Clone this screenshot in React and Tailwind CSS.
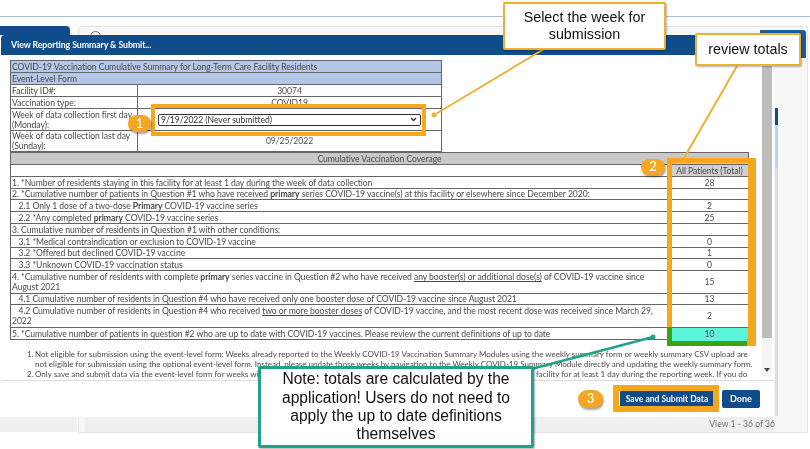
const rows = [
  { h: 12, total: '', text: '' },
  { h: 12, total: '28', text: <>1. *Number of residents staying in this facility for at least 1 day during the week of data collection</> },
  { h: 11, wide: true, text: <>2. *Cumulative number of patients in Question #1 who have received <b>primary</b> series COVID-19 vaccine(s) at this facility or elsewhere since December 2020:</> },
  { h: 12, total: '2', text: <>&nbsp;&nbsp;&nbsp;2.1 Only 1 dose of a two-dose <b>Primary</b> COVID-19 vaccine series</> },
  { h: 12, total: '25', text: <>&nbsp;&nbsp;&nbsp;2.2 *Any completed <b>primary</b> COVID-19 vaccine series</> },
  { h: 12, wide: true, text: <>3. Cumulative number of residents in Question #1 with other conditions:</> },
  { h: 12, total: '0', text: <>&nbsp;&nbsp;&nbsp;3.1 *Medical contraindication or exclusion to COVID-19 vaccine</> },
  { h: 11, total: '1', text: <>&nbsp;&nbsp;&nbsp;3.2 *Offered but declined COVID-19 vaccine</> },
  { h: 12, total: '0', text: <>&nbsp;&nbsp;&nbsp;3.3 *Unknown COVID-19 vaccination status</> },
  { h: 23, total: '15', text: <>4. *Cumulative number of residents with complete <b>primary</b> series vaccine in Question #2 who have received <u>any booster(s) or additional dose(s)</u> of COVID-19 vaccine since<br />August 2021</> },
  { h: 11, total: '13', text: <>&nbsp;&nbsp;&nbsp;4.1 Cumulative number of residents in Question #4 who have received only one booster dose of COVID-19 vaccine since August 2021</> },
  { h: 23, total: '2', text: <>&nbsp;&nbsp;&nbsp;4.2 Cumulative number of residents in Question #4 who received <u>two or more booster doses</u> of COVID-19 vaccine, and the most recent dose was received since March 29,<br />2022</> },
  { h: 12, total: '10', hl: true, text: <>5. *Cumulative number of patients in question #2 who are up to date with COVID-19 vaccines. Please review the current definitions of up to date</> },
];

function Badge({ n, className }) {
  return (
    <div className={`absolute flex items-center justify-center rounded-full bg-[#f5a623] text-white text-[13px] shadow-[1px_2px_2px_rgba(0,0,0,0.35)] ${className}`}>
      {n}
    </div>
  );
}

function Callout({ className, children }) {
  return (
    <div className={`absolute flex items-center justify-center text-center bg-white text-[#111] font-['Liberation_Sans',sans-serif] shadow-[1px_1px_2px_rgba(0,0,0,0.3)] ${className}`}>
      <span>{children}</span>
    </div>
  );
}

export default function App() {
  return (
    <div className="relative w-[810px] h-[449px] overflow-hidden bg-white font-['Lato',sans-serif] text-[#4a4a4a] blur-[0.3px]">
      {/* page behind the dialog */}
      <div className="pt-[16px]">
        <div className="border-t border-[#a9bfd6] h-[10px]" />
        <div className="flex h-[407px] mr-[2px]">
          <div className="w-[70px] bg-[#0f4c8a] rounded-tr h-[9px]" />
          <div className="flex-1 ml-[8px] border border-[#e4e4e4] bg-[#f7f7f7] rounded-tl" />
        </div>
      </div>
      <div className="absolute left-[90px] top-[31px] w-[11px] h-[11px] rounded-full border border-[#777]" />

      {/* scroller of the page */}
      <div className="absolute left-[775px] top-[108px] w-[3px] h-[60px] bg-[#b9d4ee]">
        <div className="h-[17px] bg-[#0f4c8a]" />
      </div>
      <div className="absolute left-[775px] top-[168px] w-[3px] h-[248px] bg-[#dedede]" />

      {/* corner of the dialog title bar */}
      <div className="absolute left-[760px] top-[30px] w-[46px] h-[28px] bg-[#1c5d9c] rounded-tr-[3px]" />

      {/* dialog */}
      <div className="absolute left-[1px] top-[35px] w-[773px] h-[382px] bg-white flex flex-col">
        <div className="h-[20px] shrink-0 bg-[#0f4c8a] rounded-tl pl-[10px] flex items-center text-white font-bold text-[8.8px] tracking-[-0.1px]">
          View Reporting Summary &amp; Submit...
        </div>
        <div className="flex-1 min-h-0 flex">
          <div className="flex-1 min-w-0 overflow-hidden pt-[5px] pl-[9px] pr-[11px] text-[8.6px] tracking-[-0.05px] leading-[10px]">
            <table className="w-[432px] border-collapse table-fixed">
              <colgroup>
                <col className="w-[127px]" />
                <col />
              </colgroup>
              <tbody>
                <tr className="h-[12px]">
                  <td colSpan={2} className="border border-[#666] bg-[#b4c7e7] px-px whitespace-nowrap">COVID-19 Vaccination Cumulative Summary for Long-Term Care Facility Residents</td>
                </tr>
                <tr className="h-[12px]">
                  <td colSpan={2} className="border border-[#666] bg-[#b4c7e7] px-px">Event-Level Form</td>
                </tr>
                <tr className="h-[12px]">
                  <td className="border border-[#666] px-px">Facility ID#:</td>
                  <td className="border border-[#666] text-center">30074</td>
                </tr>
                <tr className="h-[12px]">
                  <td className="border border-[#666] px-px">Vaccination type:</td>
                  <td className="border border-[#666] text-center">COVID19</td>
                </tr>
                <tr className="h-[22px]">
                  <td className="border border-[#666] px-px">Week of data collection first day<br />(Monday):</td>
                  <td className="border border-[#666] px-[20px]">
                    <div className="h-[12px] border border-[#333] rounded-[2px] flex items-center justify-between pl-[2px] pr-[3px] text-[#333]">
                      <span>9/19/2022 (Never submitted)</span>
                      <svg width="7" height="5" viewBox="0 0 7 5"><path d="M1 1l2.5 2.5L6 1" fill="none" stroke="#333" strokeWidth="1.3" /></svg>
                    </div>
                  </td>
                </tr>
                <tr className="h-[21px]">
                  <td className="border border-[#666] px-px">Week of data collection last day<br />(Sunday):</td>
                  <td className="border border-[#666] text-center">09/25/2022</td>
                </tr>
              </tbody>
            </table>
            <table className="w-[739px] border-collapse table-fixed">
              <colgroup>
                <col />
                <col className="w-[78px]" />
              </colgroup>
              <tbody>
                <tr className="h-[12px]">
                  <td colSpan={2} className="border border-[#666] bg-[#c9c9c9] text-center">Cumulative Vaccination Coverage</td>
                </tr>
                {rows.map((r, i) => (
                  <tr key={i} style={{ height: r.h }}>
                    <td colSpan={r.wide ? 2 : 1} className="border border-[#666] px-px">{r.text}</td>
                    {!r.wide && (
                      <td className={`border border-[#666] text-center ${i === 0 ? 'bg-[#d0d0d0] whitespace-nowrap' : ''} ${r.hl ? 'bg-[#5cf5dc]' : ''}`}>
                        {i === 0 ? 'All Patients (Total)' : r.total}
                      </td>
                    )}
                  </tr>
                ))}
              </tbody>
            </table>
            <div className="mt-[9px] ml-[17px] text-[8px] tracking-normal leading-[10px] whitespace-nowrap">
              <div className="flex">
                <span className="w-[8px] shrink-0">1.</span>
                <p>Not eligible for submission using the event-level form: Weeks already reported to the Weekly COVID-19 Vaccination Summary Modules using the weekly summary form or weekly summary CSV upload are<br />not eligible for submission using the optional event-level form. Instead, please update those weeks by navigation to the Weekly COVID-19 Summary Module directly and updating the weekly summary form.</p>
              </div>
              <div className="flex">
                <span className="w-[8px] shrink-0">2.</span>
                <p>Only save and submit data via the event-level form for weeks with complete vaccination data available for all residents who were staying in this facility for at least 1 day during the reporting week. If you do</p>
              </div>
            </div>
          </div>
          <div className="w-[10px] mr-[2px] shrink-0 bg-[#f5f5f5] flex flex-col items-center justify-between pb-[5px] h-[322px]">
            <div className="w-full h-[283px] bg-[#bdbdbd]" />
            <svg width="6" height="4" viewBox="0 0 6 4"><path d="M0 0h6L3 4z" fill="#444" /></svg>
          </div>
        </div>
        <div className="h-[37px] shrink-0 border-t border-[#ddd] flex items-center justify-end gap-[8px] pr-[14px]">
          <button className="h-[17px] w-[94px] bg-[#0f4c8a] text-white font-bold text-[8.5px] rounded-[1px]">Save and Submit Data</button>
          <button className="h-[18px] w-[38px] bg-[#0f4c8a] text-white font-bold text-[9px] rounded-[2px]">Done</button>
        </div>
      </div>

      {/* grid footer under the dialog */}
      <div className="absolute left-0 top-[417px] w-[775px] h-[15px] flex gap-[8px]">
        <div className="w-[77px] bg-[#efefef]" />
        <div className="flex-1 bg-[#efefef] flex items-center justify-end text-[8.6px] text-[#777]">View 1 - 36 of 36</div>
      </div>

      {/* annotations */}
      <div className="absolute left-[672px] top-[339px] w-[75px] h-[2px] bg-[#5cf5dc]" />
      <div className="absolute left-[151px] top-[104px] w-[275px] h-[32px] border-[4px] border-[#f5a81c]" />
      <div className="absolute left-[667px] top-[158px] w-[89px] h-[188px] border-[5px] border-[#f5a81c] border-r-[8px]" />
      <div className="absolute left-[667px] top-[327px] w-[80px] h-[19px] border-[5px] border-t-0 border-r-0 border-[#3aa312]" />
      <div className="absolute left-[613px] top-[385px] w-[106px] h-[27px] border-[6px] border-[#f5a81c]" />

      <svg className="absolute left-0 top-0 pointer-events-none" width="810" height="449" viewBox="0 0 810 449">
        <path d="M544 49L434 115" stroke="#eeb034" strokeWidth="2" />
        <circle cx="434" cy="115" r="2.5" fill="#eeb034" />
        <path d="M737 66L684 158" stroke="#eeb034" strokeWidth="2" />
        <path d="M653 337L520 372" stroke="#1fa38a" strokeWidth="2.5" />
        <circle cx="653" cy="337" r="2.5" fill="#1fa38a" />
      </svg>

      <Badge n="1" className="left-[128px] top-[115px] w-[23px] h-[17px]" />
      <Badge n="2" className="left-[641px] top-[159px] w-[24px] h-[16px]" />
      <Badge n="3" className="left-[578px] top-[390px] w-[25px] h-[18px]" />

      <Callout className="left-[503px] top-[2px] w-[163px] h-[48px] border-[2.5px] border-[#eeb034] rounded-[2px] text-[14.3px] leading-[17px]">Select the week for<br />submission</Callout>
      <Callout className="left-[695px] top-[33px] w-[106px] h-[33px] border-[2.5px] border-[#eeb034] rounded-[2px] text-[14.3px] leading-[17px]">review totals</Callout>
      <Callout className="left-[258px] top-[366px] w-[276px] h-[82px] border-[3px] border-[#1fa38a] rounded-[2px] text-[15.6px] leading-[18.3px]">Note: totals are calculated by the<br />application! Users do not need to<br />apply the up to date definitions<br />themselves</Callout>
    </div>
  );
}
